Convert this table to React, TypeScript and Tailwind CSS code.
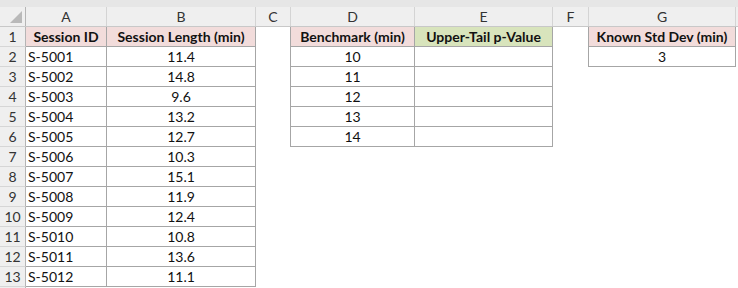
import React from "react";

const font = "font-['Lato','Liberation_Sans',sans-serif]";

const sessions = [
  ["S-5001", "11.4"],
  ["S-5002", "14.8"],
  ["S-5003", "9.6"],
  ["S-5004", "13.2"],
  ["S-5005", "12.7"],
  ["S-5006", "10.3"],
  ["S-5007", "15.1"],
  ["S-5008", "11.9"],
  ["S-5009", "12.4"],
  ["S-5010", "10.8"],
  ["S-5011", "13.6"],
  ["S-5012", "11.1"],
];

const benchmarks = ["10", "11", "12", "13", "14"];

const colHeaders = [
  { label: "A", cls: "w-[81px]" },
  { label: "B", cls: "w-[149px]" },
  { label: "C", cls: "w-[35px]" },
  { label: "D", cls: "w-[124px]" },
  { label: "E", cls: "w-[138px]" },
  { label: "F", cls: "w-[36px]" },
  { label: "G", cls: "w-[147px]" },
];

const Cell = ({
  className,
  children,
}: {
  className: string;
  children?: React.ReactNode;
}) => (
  <div className={`h-[20px] shrink-0 flex items-center pt-[1px] text-[14px] leading-none text-[#111] ${className}`}>
    {children}
  </div>
);

const DataRow = ({ r }: { r: number }) => {
  const head = r === 1;
  const sess = r >= 2 && r <= 13 ? sessions[r - 2] : null;
  const bench = r >= 2 && r <= 6 ? benchmarks[r - 2] : null;
  const grid = "border-r border-b border-[#a6a6a6]";

  return (
    <div className="flex">
      <Cell className="w-[26px] justify-center bg-[#efefef] border-r border-b border-r-[#b5b5b5] border-b-[#d6d6d6] text-[#333]">
        {r <= 13 ? r : ""}
      </Cell>

      {r <= 13 ? (
        <>
          <Cell
            className={`w-[81px] ${grid} ${
              head ? "bg-[#f2dcdb] font-bold justify-center" : "pl-[2px]"
            }`}>
            {head ? "Session ID" : sess?.[0]}
          </Cell>
          <Cell className={`w-[149px] justify-center ${grid} ${head ? "bg-[#f2dcdb] font-bold" : ""}`}>
            {head ? "Session Length (min)" : sess?.[1]}
          </Cell>
        </>
      ) : (
        <>
          <Cell className="w-[81px]" />
          <Cell className="w-[149px]" />
        </>
      )}

      <Cell className={`w-[35px] ${r <= 6 ? "border-r border-[#a6a6a6]" : ""}`} />

      {r <= 6 ? (
        <>
          <Cell className={`w-[124px] justify-center ${grid} ${head ? "bg-[#f2dcdb] font-bold" : ""}`}>
            {head ? "Benchmark (min)" : bench}
          </Cell>
          <Cell className={`w-[138px] justify-center ${grid} ${head ? "bg-[#d8e4bc] font-bold" : ""}`}>
            {head ? "Upper-Tail p-Value" : ""}
          </Cell>
        </>
      ) : (
        <>
          <Cell className="w-[124px]" />
          <Cell className="w-[138px]" />
        </>
      )}

      <Cell className={`w-[36px] ${r <= 2 ? "border-r border-[#a6a6a6]" : ""}`} />

      {r <= 2 ? (
        <Cell className={`w-[147px] justify-center ${grid} ${head ? "bg-[#f2dcdb] font-bold" : ""}`}>
          {head ? "Known Std Dev (min)" : "3"}
        </Cell>
      ) : (
        <Cell className="w-[147px]" />
      )}
      <Cell className="w-[2px]" />
    </div>
  );
};

export default function App() {
  const rows = Array.from({ length: 14 }, (_, i) => i + 1);

  return (
    <div className={`w-[738px] h-[288px] overflow-hidden bg-white ${font}`}>
      <div className="h-[7px] bg-[#e6e6e6]" />

      <div className="flex h-[20px] bg-[#efefef] border-b border-[#c8c8c8]">
        <div className="relative w-[26px] shrink-0 border-r border-[#b5b5b5]">
          <div className="absolute left-[10px] top-[4px] w-[12px] h-[12px] bg-[#b9b9b9] [clip-path:polygon(100%_0,100%_100%,0_100%)]" />
        </div>
        {colHeaders.map((c) => (
          <div
            key={c.label}
            className={`${c.cls} shrink-0 flex items-center justify-center border-r border-[#d4d4d4] text-[14px] text-[#333]`}>
            {c.label}
          </div>
        ))}
      </div>

      {rows.map((r) => (
        <DataRow key={r} r={r} />
      ))}
    </div>
  );
}
